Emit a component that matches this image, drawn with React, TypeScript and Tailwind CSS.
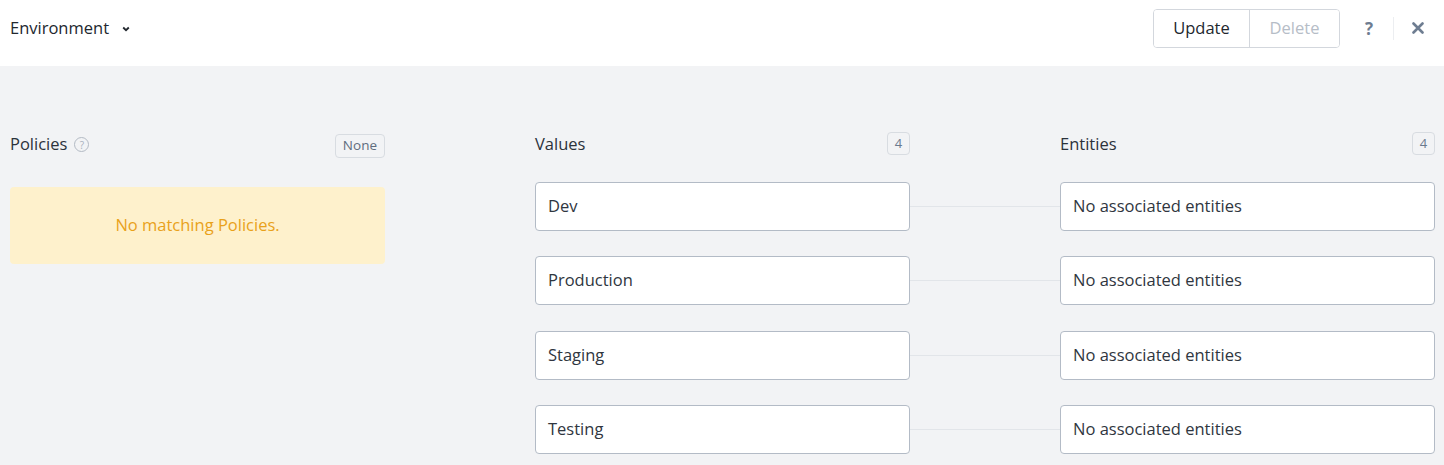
import React from 'react';

const values = ['Dev', 'Production', 'Staging', 'Testing'];

function CountBadge({ children }: { children: React.ReactNode }) {
  return (
    <span className="flex h-[23px] min-w-[23px] items-center justify-center rounded-[4px] border border-[#d8dce1] px-[5px] text-[13px] leading-none text-[#6a7a8e]">
      {children}
    </span>
  );
}

function Header() {
  return (
    <div className="flex h-[66px] items-center justify-between bg-white pl-[10px] pr-[20px]">
      <div className="flex items-center pb-[10px]">
        <span className="text-[16.5px] text-[#22272e]">Environment</span>
        <svg width="8" height="6" viewBox="0 0 8 6" className="ml-[13px] mt-[2px]">
          <polyline points="1.2,1.5 4,4.2 6.8,1.5" fill="none" stroke="#22272e" strokeWidth="1.8" />
        </svg>
      </div>
      <div className="flex items-center pb-[10px]">
        <div className="flex h-[39px] overflow-hidden rounded-[4px] border border-[#d3d7dd]">
          <button className="w-[96px] border-r border-[#d3d7dd] bg-white text-[16.5px] text-[#22272e]">Update</button>
          <button className="w-[89px] bg-white text-[16.5px] text-[#b6bdc7]">Delete</button>
        </div>
        {/* 도움말 / 닫기 */}
        <span className="ml-[23px] w-[12px] text-center text-[17px] font-bold leading-none text-[#6e7d91]">?</span>
        <span className="ml-[18px] h-[23px] w-px bg-[#eceef1]" />
        <svg width="12" height="12" viewBox="0 0 12 12" className="ml-[18px]">
          <path d="M1.5 1.5 L10.5 10.5 M10.5 1.5 L1.5 10.5" stroke="#6e7d91" strokeWidth="2.6" strokeLinecap="round" />
        </svg>
      </div>
    </div>
  );
}

export default function App() {
  return (
    <div className="h-[465px] w-[1444px] overflow-hidden bg-[#f2f3f5]" style={{ fontFamily: '"Open Sans", "Liberation Sans", sans-serif' }}>
      <Header />
      <div className="flex gap-[150px] pl-[10px] pr-[9px] pt-[67px]">
        {/* Policies */}
        <div className="flex w-[376px] flex-col">
          <div className="flex h-[23px] items-center justify-between">
            <div className="flex items-center">
              <span className="text-[16.5px] text-[#2b323b]">Policies</span>
              <span className="ml-[7px] flex h-[15px] w-[15px] items-center justify-center rounded-full border border-[#b3bac4] text-[10px] leading-none text-[#a9b1bc]">?</span>
            </div>
            <span className="mt-[2px] flex h-[24px] items-center rounded-[4px] border border-[#d8dce1] px-[7px] text-[13.5px] leading-none text-[#5f6d7e]">None</span>
          </div>
          <div className="mt-[31px] flex h-[77px] items-center justify-center rounded-[4px] bg-[#fef1cc] text-[16.5px] text-[#e9a11a]">
            No matching Policies.
          </div>
        </div>

        {/* Values / Entities */}
        <div className="flex flex-col">
          <div className="grid grid-cols-[375px_150px_375px]">
            <div className="flex h-[23px] items-center justify-between">
              <span className="text-[16.5px] text-[#2b323b]">Values</span>
              <span className="-mt-[2px]"><CountBadge>4</CountBadge></span>
            </div>
            <div />
            <div className="flex h-[23px] items-center justify-between">
              <span className="text-[16.5px] text-[#2b323b]">Entities</span>
              <span className="-mt-[2px]"><CountBadge>4</CountBadge></span>
            </div>
          </div>
          <div className="mt-[26px] flex flex-col gap-[25.3px]">
            {values.map((v) => (
              <div key={v} className="grid grid-cols-[375px_150px_375px] items-center">
                <div className="flex h-[49px] items-center rounded-[4px] border border-[#b3bbc6] bg-white px-[12px] text-[16.5px] text-[#2f3640]">
                  {v}
                </div>
                <div className="h-px bg-[#e2e5e9]" />
                <div className="flex h-[49px] items-center rounded-[4px] border border-[#b3bbc6] bg-white px-[12px] text-[16.5px] text-[#2f3640]">
                  No associated entities
                </div>
              </div>
            ))}
          </div>
        </div>
      </div>
    </div>
  );
}
